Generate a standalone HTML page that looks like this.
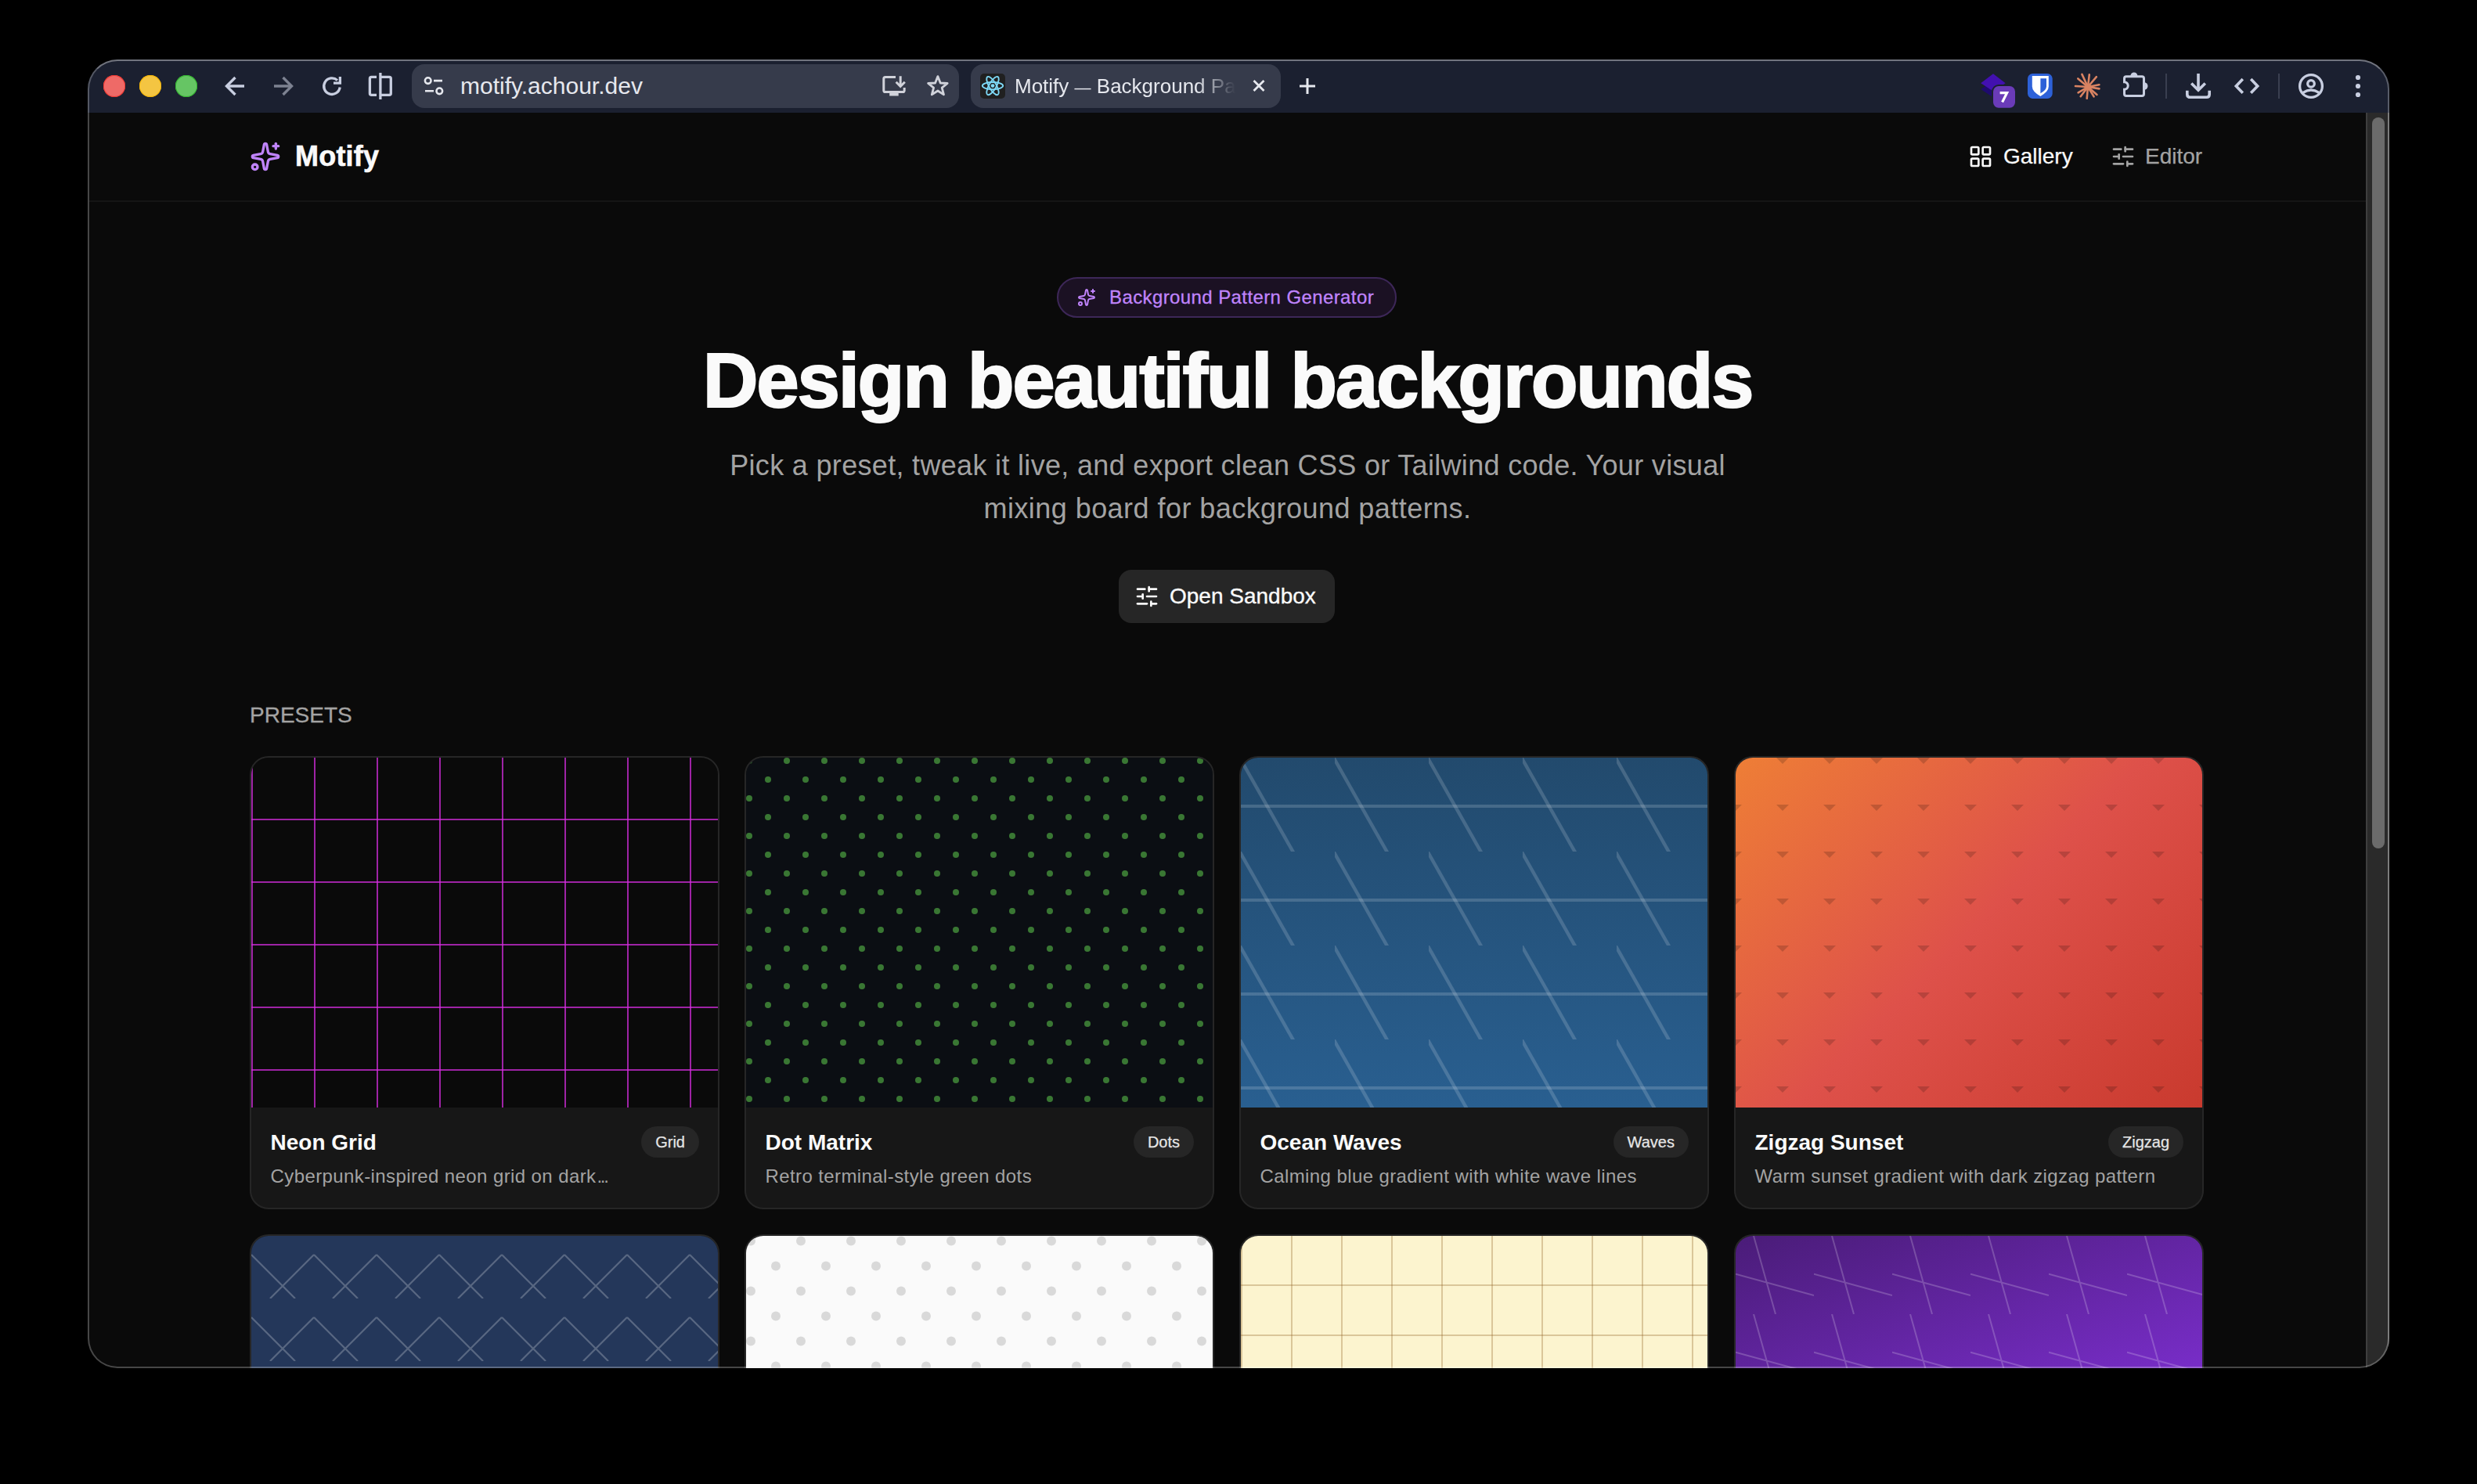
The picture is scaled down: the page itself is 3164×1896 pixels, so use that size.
<!DOCTYPE html>
<html><head><meta charset="utf-8">
<style>
html,body{margin:0;padding:0;background:#000;width:3164px;height:1896px;overflow:hidden;}
body{font-family:"Liberation Sans",sans-serif;position:relative;}
.a{position:absolute;}
#win{position:absolute;left:112px;top:76px;width:2940px;height:1672px;border-radius:38px;overflow:hidden;background:#0a0a0a;}
#inner{position:absolute;left:-112px;top:-76px;width:3164px;height:1896px;}
#frame{position:absolute;left:112px;top:76px;width:2940px;height:1672px;border-radius:38px;box-sizing:border-box;border:2px solid rgba(255,255,255,0.25);border-top-color:rgba(255,255,255,0.38);border-right-color:rgba(255,255,255,0.27);pointer-events:none;}
#toolbar{left:112px;top:76px;width:2940px;height:68px;background:#1b2030;}
.tl{position:absolute;width:28px;height:28px;border-radius:50%;top:96px;}
.pill{position:absolute;background:#363b4b;border-radius:16px;}
.ttext{position:absolute;white-space:nowrap;color:#e6e8ee;}
svg{position:absolute;overflow:visible;}
</style></head><body>
<div id="win"><div id="inner">
  <!-- toolbar -->
  <div class="a" id="toolbar"></div>
  <div class="tl" style="left:132px;background:#ee6a67;box-shadow:inset 0 0 0 0.9px #f2352e"></div>
  <div class="tl" style="left:178px;background:#f4c542;box-shadow:inset 0 0 0 0.9px #f5b400"></div>
  <div class="tl" style="left:224px;background:#66c564;box-shadow:inset 0 0 0 0.9px #2fb52a"></div>
  <div class="pill" style="left:526px;top:82px;width:699px;height:56px;"></div>
  <div class="ttext" id="url" style="left:588px;top:80px;font-size:30px;line-height:60px;">motify.achour.dev</div>
  <div class="pill" style="left:1240px;top:82px;width:396px;height:56px;"></div>
  <div class="a" style="left:1252px;top:94px;width:32px;height:32px;background:#202020;border-radius:5px;"></div>
  <div class="ttext" id="tabtitle" style="left:1296px;top:80px;font-size:26px;line-height:60px;width:282px;overflow:hidden;-webkit-mask-image:linear-gradient(to right,#000 232px,transparent 282px);">Motify <span style="font-size:21px;">—</span> Background Pattern Generator</div>

  <svg id="tbicons" style="left:0;top:0;width:3164px;height:200px;" viewBox="0 0 3164 200" fill="none" stroke-linecap="butt" stroke-linejoin="miter">
    <!-- back -->
    <g stroke="#c8cee0" stroke-width="3.4">
      <path d="M289.5 110H312"/><path d="M300.5 99L289.5 110L300.5 121"/>
    </g>
    <g stroke="#7d8291" stroke-width="3.4">
      <path d="M350 110H372.5"/><path d="M361.5 99L372.5 110L361.5 121"/>
    </g>
    <!-- reload -->
    <g stroke="#c8cee0" stroke-width="3.3">
      <path d="M434.2 111.5A10.3 10.3 0 1 1 431 102.6"/>
      <path d="M434.4 98V106.1H426"/>
    </g>
    <!-- split -->
    <g stroke="#c8cee0" stroke-width="3.3">
      <path d="M481 98.4H474.5Q472.4 98.4 472.4 100.5V119.2Q472.4 121.3 474.5 121.3H481"/>
      <path d="M485.9 93V127"/>
      <path d="M486 98.4H497.2Q499.3 98.4 499.3 100.5V119.2Q499.3 121.3 497.2 121.3H486"/>
    </g>
    <!-- tune icon in url -->
    <g stroke="#e6e8ee" stroke-width="2.6">
      <circle cx="546.7" cy="103.1" r="3.8"/><path d="M554 103.1H565"/>
      <path d="M543 116.3H554"/><circle cx="561.3" cy="116.3" r="3.8"/>
    </g>
    <!-- install -->
    <g stroke="#d0d2da" stroke-width="3">
      <path d="M1144 98.6H1131Q1128.8 98.6 1128.8 100.8V115.4Q1128.8 117.6 1131 117.6H1153Q1155.2 117.6 1155.2 115.4V112"/>
      <path d="M1150.2 97.3V110"/><path d="M1144.6 104.8L1150.2 110.4L1155.8 104.8"/>
    </g>
    <rect x="1136.2" y="118.5" width="11.5" height="4" fill="#d0d2da"/>
    <!-- star -->
    <path d="M1197.9 97.6L1201.2 106.0L1210.2 106.5L1203.2 112.2L1205.5 120.9L1197.9 116.0L1190.3 120.9L1192.6 112.2L1185.6 106.5L1194.6 106.0Z" stroke="#d0d2da" stroke-width="2.8" stroke-linejoin="round"/>
    <!-- react favicon -->
    <g stroke="#7dd8f5" stroke-width="1.9" fill="none">
      <ellipse cx="1268" cy="109.6" rx="13.2" ry="4.6"/>
      <ellipse cx="1268" cy="109.6" rx="13.2" ry="4.6" transform="rotate(60 1268 109.6)"/>
      <ellipse cx="1268" cy="109.6" rx="13.2" ry="4.6" transform="rotate(120 1268 109.6)"/>
    </g>
    <circle cx="1268" cy="109.6" r="2.4" fill="#7dd8f5"/>
    <!-- close x -->
    <g stroke="#e6e8ee" stroke-width="2.8">
      <path d="M1601.5 103L1614.5 116M1614.5 103L1601.5 116"/>
    </g>
    <!-- plus -->
    <g stroke="#e6e8ee" stroke-width="3">
      <path d="M1670 100V120M1660 110H1680"/>
    </g>
    <!-- ext 1: layered diamond -->
    <path d="M2530.2 114L2546 103.5L2561.7 114L2546 124.5Z" fill="#1e0a6e"/>
    <path d="M2530.2 106.2L2546 94.2L2561.7 106.2L2546 116.6Z" fill="#4210b0"/>
    <rect x="2544" y="108" width="32" height="31.7" rx="9" fill="#1b2030"/>
    <rect x="2546" y="110" width="28" height="27.7" rx="7" fill="#6a3bb8"/>
    <path d="M2554.6 118.6H2563.6L2557.6 130.5" stroke="#fff" stroke-width="3.2" stroke-linejoin="miter"/>
    <!-- bitwarden -->
    <rect x="2590" y="94" width="31.7" height="32" rx="6.5" fill="#2d61d8"/>
    <path d="M2595.8 97.1H2616.8V110.5Q2616.8 117 2606.3 122.9Q2595.8 117 2595.8 110.5Z" fill="#fff"/>
    <path d="M2606.4 100.2H2614V110.3Q2614 115.2 2606.4 119.2Z" fill="#2d61d8"/>
    <!-- claude -->
    <g stroke="#d98362" stroke-width="2.6" stroke-linecap="round">
      <path d="M2667 111L2659.4 94.9"/><path d="M2667 111L2668.8 95.3"/><path d="M2667 111L2677.9 98.2"/>
      <path d="M2667 111L2681.4 108.3"/><path d="M2667 111L2681.5 113.4"/><path d="M2667 111L2678.5 120.9"/>
      <path d="M2667 111L2674.6 123.4"/><path d="M2667 111L2665.7 125.8"/><path d="M2667 111L2657.7 123.2"/>
      <path d="M2667 111L2654.6 118.4"/><path d="M2667 111L2651 110"/><path d="M2667 111L2654.3 100.4"/>
    </g>
    <circle cx="2667" cy="111" r="4" fill="#d98362"/>
    <!-- puzzle -->
    <path d="M2716 97.7H2736A2.5 2.5 0 0 1 2738.5 100.2V120A2.5 2.5 0 0 1 2736 122.5H2716A2.5 2.5 0 0 1 2713.5 120V114.2A4.7 4.7 0 0 0 2713.5 104.8V100.2A2.5 2.5 0 0 1 2716 97.7Z" stroke="#c8cee0" stroke-width="3"/>
    <path d="M2721.4 97A4.5 4.5 0 0 1 2730.4 97Z" fill="#c8cee0"/>
    <path d="M2738.7 105.2A4.8 4.8 0 0 1 2738.7 114.8Z" fill="#c8cee0"/>
    <rect x="2766" y="94" width="2" height="32" fill="#3a3f50"/>
    <!-- download -->
    <g stroke="#c8cee0" stroke-width="3.6">
      <path d="M2808 94V115"/><path d="M2799.2 106.5L2808 115.3L2816.8 106.5"/>
      <path d="M2793.8 115.8V120.5Q2793.8 124.2 2797.5 124.2H2818.5Q2822.2 124.2 2822.2 120.5V115.8"/>
    </g>
    <!-- code -->
    <g stroke="#c8cee0" stroke-width="3.6">
      <path d="M2864.8 101L2856.3 110L2864.8 118.8"/><path d="M2875.2 101L2883.7 110L2875.2 118.8"/>
    </g>
    <rect x="2910" y="94" width="2" height="32" fill="#3a3f50"/>
    <!-- profile -->
    <g stroke="#c8cee0" stroke-width="3.3">
      <circle cx="2952" cy="110" r="14.4"/>
      <circle cx="2952" cy="106.9" r="4.3"/>
      <path d="M2941.8 118.4Q2952 111.6 2962.2 118.4"/>
    </g>
    <g fill="#c8cee0"><circle cx="3012" cy="99" r="3.1"/><circle cx="3012" cy="110" r="3.1"/><circle cx="3012" cy="121" r="3.1"/></g>
  </svg>
  <!-- header -->
  <div class="a" style="left:114px;top:256px;width:2908px;height:2px;background:#151515;"></div>
  <svg style="left:319px;top:180px;width:40px;height:40px;" viewBox="0 0 24 24" fill="none" stroke="#c084fc" stroke-width="2" stroke-linecap="round" stroke-linejoin="round">
    <path d="M11.017 2.814a1 1 0 0 1 1.966 0l1.051 5.558a2 2 0 0 0 1.594 1.594l5.558 1.051a1 1 0 0 1 0 1.966l-5.558 1.051a2 2 0 0 0-1.594 1.594l-1.051 5.558a1 1 0 0 1-1.966 0l-1.051-5.558a2 2 0 0 0-1.594-1.594l-5.558-1.051a1 1 0 0 1 0-1.966l5.558-1.051a2 2 0 0 0 1.594-1.594z"/>
    <path d="M20 2v4"/><path d="M22 4h-4"/><circle cx="4" cy="20" r="2"/>
  </svg>
  <div class="ttext" id="logo" style="left:377px;top:170px;font-size:36px;line-height:60px;font-weight:700;color:#fafafa;-webkit-text-stroke:0.6px #fafafa;letter-spacing:0.2px;">Motify</div>
  <svg style="left:2514px;top:184px;width:32px;height:32px;" viewBox="0 0 24 24" fill="none" stroke="#fafafa" stroke-width="2" stroke-linecap="round" stroke-linejoin="round">
    <rect width="7" height="7" x="3" y="3" rx="1"/><rect width="7" height="7" x="14" y="3" rx="1"/><rect width="7" height="7" x="14" y="14" rx="1"/><rect width="7" height="7" x="3" y="14" rx="1"/>
  </svg>
  <div class="ttext" id="gal" style="left:2559px;top:170px;font-size:28px;line-height:60px;color:#fafafa;-webkit-text-stroke:0.25px #fafafa;">Gallery</div>
  <svg style="left:2696px;top:184px;width:32px;height:32px;" viewBox="0 0 24 24" fill="none" stroke="#a3a3a3" stroke-width="2" stroke-linecap="round" stroke-linejoin="round">
    <path d="M10 5H3"/><path d="M12 19H3"/><path d="M14 3v4"/><path d="M16 17v4"/><path d="M21 12h-9"/><path d="M21 19h-5"/><path d="M21 5h-7"/><path d="M8 10v4"/><path d="M8 12H3"/>
  </svg>
  <div class="ttext" id="edi" style="left:2740px;top:170px;font-size:28px;line-height:60px;color:#a3a3a3;-webkit-text-stroke:0.25px #a3a3a3;">Editor</div>

  <!-- hero -->
  <div class="a" style="left:1350px;top:354px;width:434px;height:52px;box-sizing:border-box;border-radius:26px;background:#1b1123;border:2px solid #3d2758;"></div>
  <svg style="left:1375.5px;top:368px;width:24px;height:24px;" viewBox="0 0 24 24" fill="none" stroke="#c084fc" stroke-width="2" stroke-linecap="round" stroke-linejoin="round">
    <path d="M11.017 2.814a1 1 0 0 1 1.966 0l1.051 5.558a2 2 0 0 0 1.594 1.594l5.558 1.051a1 1 0 0 1 0 1.966l-5.558 1.051a2 2 0 0 0-1.594 1.594l-1.051 5.558a1 1 0 0 1-1.966 0l-1.051-5.558a2 2 0 0 0-1.594-1.594l-5.558-1.051a1 1 0 0 1 0-1.966l5.558-1.051a2 2 0 0 0 1.594-1.594z"/>
    <path d="M20 2v4"/><path d="M22 4h-4"/><circle cx="4" cy="20" r="2"/>
  </svg>
  <div class="ttext" id="badge" style="left:1417px;top:350px;font-size:24px;line-height:60px;color:#c084fc;letter-spacing:0.4px;-webkit-text-stroke:0.3px #c084fc;">Background Pattern Generator</div>
  <div class="ttext" id="h1" style="left:0;width:3136px;text-align:center;top:426px;font-size:98px;line-height:120px;font-weight:700;color:#fafafa;letter-spacing:-2.3px;-webkit-text-stroke:2px #fafafa;">Design beautiful backgrounds</div>
  <div class="ttext" id="sub1" style="left:0;width:3136px;text-align:center;top:567px;font-size:36px;line-height:56px;color:#a3a3a3;letter-spacing:0.32px;">Pick a preset, tweak it live, and export clean CSS or Tailwind code. Your visual</div>
  <div class="ttext" id="sub2" style="left:0;width:3136px;text-align:center;top:622px;font-size:36px;line-height:56px;color:#a3a3a3;letter-spacing:0.45px;">mixing board for background patterns.</div>
  <div class="a" style="left:1429px;top:728px;width:276px;height:68px;border-radius:16px;background:#262626;"></div>
  <svg style="left:1448.5px;top:745.8px;width:32px;height:32px;" viewBox="0 0 24 24" fill="none" stroke="#fafafa" stroke-width="2" stroke-linecap="round" stroke-linejoin="round">
    <path d="M10 5H3"/><path d="M12 19H3"/><path d="M14 3v4"/><path d="M16 17v4"/><path d="M21 12h-9"/><path d="M21 19h-5"/><path d="M21 5h-7"/><path d="M8 10v4"/><path d="M8 12H3"/>
  </svg>
  <div class="ttext" id="btn" style="left:1494px;top:732px;font-size:28px;line-height:60px;color:#fafafa;-webkit-text-stroke:0.35px #fafafa;">Open Sandbox</div>
  <div class="ttext" id="presets" style="left:319px;top:884px;font-size:28px;line-height:60px;color:#a3a3a3;letter-spacing:0px;-webkit-text-stroke:0.3px #a3a3a3;">PRESETS</div>


  <!-- cards -->
  <style>
  .card{position:absolute;width:600px;height:579px;box-sizing:border-box;border:2px solid #262626;border-radius:24px;overflow:hidden;background:#171717;}
  .prev{position:absolute;left:0;top:0;width:596px;height:447px;display:block;}
  .ct{position:absolute;left:24.5px;top:472px;font-size:28px;line-height:40px;font-weight:700;color:#fafafa;white-space:nowrap;}
  .tag{position:absolute;right:24px;top:471px;height:40px;line-height:40px;padding:0 18px;border-radius:20px;background:#262626;color:#e5e5e5;font-size:20px;white-space:nowrap;-webkit-text-stroke:0.25px #e5e5e5;}
  .cd{position:absolute;left:24.5px;top:518px;font-size:24px;line-height:34px;color:#a3a3a3;white-space:nowrap;letter-spacing:0.4px;}
  </style>
  <div class="card" style="left:319px;top:966px;">
    <svg class="prev" width="596" height="447" style="position:absolute;overflow:hidden;">
      <defs><pattern id="p1" width="80" height="80" patternUnits="userSpaceOnUse" x="0" y="-2">
        <rect x="0" y="0" width="2" height="80" fill="rgba(215,45,225,0.72)"/>
        <rect x="0" y="0" width="80" height="2" fill="rgba(215,45,225,0.72)"/>
      </pattern></defs>
      <rect width="596" height="447" fill="#0a0a0a"/><rect width="596" height="447" fill="url(#p1)"/>
    </svg>
    <div class="ct">Neon Grid</div><div class="tag">Grid</div>
    <div class="cd">Cyberpunk-inspired neon grid on dark<span style="letter-spacing:-2.3px;margin-left:1px;">...</span></div>
  </div>
  <div class="card" style="left:951px;top:966px;">
    <svg class="prev" width="596" height="447" style="position:absolute;overflow:hidden;">
      <defs><pattern id="p2" width="48" height="48" patternUnits="userSpaceOnUse" x="0" y="0">
        <circle cx="4" cy="4" r="4" fill="#397733"/><circle cx="28" cy="28" r="4" fill="#397733"/>
      </pattern></defs>
      <rect width="596" height="447" fill="#0b0e13"/><rect width="596" height="447" fill="url(#p2)"/>
    </svg>
    <div class="ct">Dot Matrix</div><div class="tag">Dots</div>
    <div class="cd">Retro terminal-style green dots</div>
  </div>
  <div class="card" style="left:1583px;top:966px;">
    <svg class="prev" width="596" height="447" style="position:absolute;overflow:hidden;">
      <defs>
        <linearGradient id="g3" x1="0" y1="0" x2="0" y2="1"><stop offset="0" stop-color="#224a6d"/><stop offset="1" stop-color="#295f90"/></linearGradient>
        <pattern id="p3" width="120" height="120" patternUnits="userSpaceOnUse" x="0" y="0">
          <rect x="0" y="60" width="120" height="4" fill="rgba(255,255,255,0.16)"/>
          <path d="M0 0H1L69 120H64L0 7.06Z" fill="rgba(255,255,255,0.16)"/>
        </pattern></defs>
      <rect width="596" height="447" fill="url(#g3)"/><rect width="596" height="447" fill="url(#p3)"/>
    </svg>
    <div class="ct">Ocean Waves</div><div class="tag">Waves</div>
    <div class="cd">Calming blue gradient with white wave lines</div>
  </div>
  <div class="card" style="left:2215px;top:966px;">
    <svg class="prev" width="596" height="447" style="position:absolute;overflow:hidden;">
      <defs>
        <linearGradient id="g4" x1="37.3" y1="-37.2" x2="558.7" y2="484.2" gradientUnits="userSpaceOnUse"><stop offset="0" stop-color="#ee7e36"/><stop offset="0.5" stop-color="#de514a"/><stop offset="1" stop-color="#c93a2e"/></linearGradient>
        <pattern id="p4" width="60" height="60" patternUnits="userSpaceOnUse" x="0" y="0">
          <path d="M-8 0H8L0 8Z" fill="rgba(0,0,0,0.17)"/><path d="M52 0H68L60 8Z" fill="rgba(0,0,0,0.17)"/>
        </pattern></defs>
      <rect width="596" height="447" fill="url(#g4)"/><rect width="596" height="447" fill="url(#p4)"/>
    </svg>
    <div class="ct">Zigzag Sunset</div><div class="tag">Zigzag</div>
    <div class="cd">Warm sunset gradient with dark zigzag pattern</div>
  </div>

  <div class="card" style="left:319px;top:1577px;">
    <svg class="prev" width="596" height="447" style="position:absolute;overflow:hidden;">
      <defs><pattern id="p5" width="80" height="80" patternUnits="userSpaceOnUse" x="0" y="0">
        <path d="M0 24L56 80M0 24L-56 80M80 24L24 80M80 24L136 80" stroke="rgba(255,255,255,0.24)" stroke-width="2.2" fill="none"/>
      </pattern></defs>
      <rect width="596" height="447" fill="#24375a"/><rect width="596" height="447" fill="url(#p5)"/>
    </svg>
  </div>
  <div class="card" style="left:951px;top:1577px;">
    <svg class="prev" width="596" height="447" style="position:absolute;overflow:hidden;">
      <defs><pattern id="p6" width="64" height="64" patternUnits="userSpaceOnUse" x="0" y="0">
        <circle cx="6" cy="6.5" r="6" fill="#d9d9d9"/><circle cx="38" cy="38.5" r="6" fill="#d9d9d9"/>
      </pattern></defs>
      <rect width="596" height="447" fill="#fafafa"/><rect width="596" height="447" fill="url(#p6)"/>
    </svg>
  </div>
  <div class="card" style="left:1583px;top:1577px;">
    <svg class="prev" width="596" height="447" style="position:absolute;overflow:hidden;">
      <defs><pattern id="p7" width="64" height="64" patternUnits="userSpaceOnUse" x="0" y="-2">
        <rect x="0" y="0" width="2" height="64" fill="rgba(146,100,40,0.32)"/>
        <rect x="0" y="0" width="64" height="2" fill="rgba(146,100,40,0.32)"/>
      </pattern></defs>
      <rect width="596" height="447" fill="#fcf4cf"/><rect width="596" height="447" fill="url(#p7)"/>
    </svg>
  </div>
  <div class="card" style="left:2215px;top:1577px;">
    <svg class="prev" width="596" height="447" style="position:absolute;overflow:hidden;">
      <defs>
        <linearGradient id="g8" x1="0" y1="0" x2="110.6" y2="331.8" gradientUnits="userSpaceOnUse"><stop offset="0" stop-color="#4a1c78"/><stop offset="1" stop-color="#782dc8"/></linearGradient>
        <pattern id="p8" width="100" height="100" patternUnits="userSpaceOnUse" x="0" y="0">
          <path d="M23 0L51 100M0 48.6L100 76.1" stroke="rgba(255,255,255,0.2)" stroke-width="2" fill="none"/>
        </pattern></defs>
      <rect width="596" height="447" fill="url(#g8)"/><rect width="596" height="447" fill="url(#p8)"/>
    </svg>
  </div>

  <!-- scrollbar -->
  <div class="a" style="left:3022px;top:144px;width:30px;height:1604px;background:#2a2a2a;border-left:2px solid #3e3e3e;border-right:2px solid #4c4c4c;box-sizing:border-box;"></div>
  <div class="a" style="left:3030px;top:150px;width:16px;height:934px;background:#6b6b6b;border-radius:8px;"></div>
</div></div>
<div id="frame"></div>
</body></html>
